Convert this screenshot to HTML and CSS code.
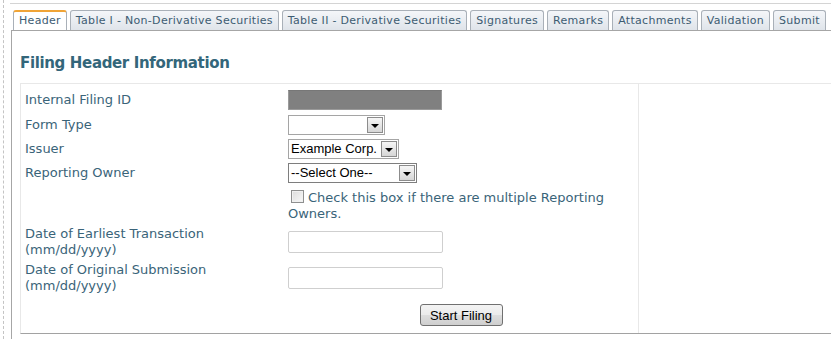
FILE: index.html
```html
<!DOCTYPE html>
<html>
<head>
<meta charset="utf-8">
<link rel="stylesheet" href="styles.css">
</head>
<body>
<div class="page">
  <div class="rail"></div>
  <div class="main">
    <div class="tabs">
      <div class="tab active">Header</div>
      <div class="tab">Table I - Non-Derivative Securities</div>
      <div class="tab">Table II - Derivative Securities</div>
      <div class="tab">Signatures</div>
      <div class="tab">Remarks</div>
      <div class="tab">Attachments</div>
      <div class="tab">Validation</div>
      <div class="tab">Submit</div>
    </div>
    <div class="panel">
      <h1 class="title">Filing Header Information</h1>
      <div class="form">
        <div class="fields">
          <div class="row row-first">
            <div class="label">Internal Filing ID</div>
            <div class="field"><div class="readonly"></div></div>
          </div>
          <div class="row">
            <div class="label">Form Type</div>
            <div class="field"><div class="select w-form"><span class="sel-text"></span><span class="arrow"></span></div></div>
          </div>
          <div class="row">
            <div class="label">Issuer</div>
            <div class="field"><div class="select w-issuer"><span class="sel-text">Example Corp.</span><span class="arrow"></span></div></div>
          </div>
          <div class="row">
            <div class="label">Reporting Owner</div>
            <div class="field"><div class="select w-owner dark"><span class="sel-text">--Select One--</span><span class="arrow"></span></div></div>
          </div>
          <div class="row row-check">
            <div class="label"></div>
            <div class="field check-text"><span class="checkbox"></span>Check this box if there are multiple Reporting Owners.</div>
          </div>
          <div class="row">
            <div class="label">Date of Earliest Transaction<br>(mm/dd/yyyy)</div>
            <div class="field"><div class="text-input"></div></div>
          </div>
          <div class="row">
            <div class="label">Date of Original Submission<br>(mm/dd/yyyy)</div>
            <div class="field"><div class="text-input"></div></div>
          </div>
          <div class="row row-button">
            <div class="label"></div>
            <div class="field center"><button class="btn">Start Filing</button></div>
          </div>
        </div>
        <div class="side"></div>
      </div>
    </div>
  </div>
</div>
</body>
</html>
```

FILE: styles.css
```css
html, body {
  margin: 0;
  padding: 0;
  background: #fff;
  overflow: hidden;
}
body {
  width: 831px;
  height: 339px;
  font-family: "DejaVu Sans", Verdana, sans-serif;
}
.page {
  display: flex;
  height: 339px;
}
.rail {
  width: 3px;
  flex: none;
  border-right: 1px dashed #c4c4c4;
}
.main {
  flex: 1;
  margin-left: 6px;
  margin-top: 3px;
  border-top: 1px solid #d4d4d4;
  display: flex;
  flex-direction: column;
}
.tabs {
  display: flex;
  gap: 3px;
  padding: 6px 0 0 3px;
}
.tab {
  height: 20px;
  box-sizing: border-box;
  padding: 0 5px;
  font-size: 11px;
  letter-spacing: 0.3px;
  line-height: 19px;
  color: #3d5c72;
  border: 1px solid #a9b0b8;
  border-bottom: none;
  border-radius: 3px 3px 0 0;
  background: linear-gradient(#f4f6f9, #dfe4ea);
  white-space: nowrap;
}
.tab.active {
  background: #fff;
  border-top: 2px solid #f0a436;
  line-height: 18px;
}
.panel {
  flex: 1;
  margin-left: 1px;
  border-left: 1px solid #a6a6a6;
  border-top: 1px solid #a6a6a6;
  padding: 0 0 0 8px;
}
.title {
  margin: 0;
  padding-top: 22px;
  font-size: 15px;
  letter-spacing: -0.35px;
  line-height: 20px;
  font-weight: bold;
  color: #33667a;
}
.form {
  margin-top: 10px;
  display: grid;
  grid-template-columns: 618px 1fr;
  border-top: 1px solid #e8e8e8;
  border-left: 1px solid #e8e8e8;
  border-bottom: 1px solid #a2a2a2;
}
.fields {
  border-right: 1px solid #e8e8e8;
  padding: 4px 4px 0 4px;
}
.row {
  display: grid;
  grid-template-columns: 263px 1fr;
  align-items: center;
  padding: 2px 0;
}
.row-first {
  padding-bottom: 3px;
}
.label {
  font-size: 13px;
  line-height: 16px;
  color: #3a6479;
}
.readonly {
  width: 154px;
  height: 20px;
  box-sizing: border-box;
  background: #808080;
  border: 1px solid #9a9a9a;
  border-top-color: #777;
}
.select {
  display: flex;
  align-items: center;
  height: 20px;
  box-sizing: border-box;
  border: 1px solid #a5a5a5;
  background: #fff;
  padding: 1px;
  font-family: "Liberation Sans", Arial, sans-serif;
  font-size: 13px;
  color: #000;
}
.select.dark {
  border-color: #7e7e7e;
}
.w-form { width: 97px; }
.w-issuer { width: 111px; }
.w-owner { width: 129px; }
.sel-text {
  flex: 1;
  padding-left: 1px;
  white-space: nowrap;
  overflow: hidden;
  line-height: 16px;
}
.arrow {
  width: 16px;
  height: 16px;
  box-sizing: border-box;
  border: 1px solid #8c8c8c;
  background: linear-gradient(#f6f6f6, #d6d6d6);
  display: flex;
  align-items: center;
  justify-content: center;
}
.arrow::after {
  content: "";
  border-left: 4px solid transparent;
  border-right: 4px solid transparent;
  border-top: 4px solid #000;
  margin-top: 1px;
}
.row-check {
  padding: 5px 0 2px;
}
.check-text {
  font-size: 13px;
  line-height: 16px;
  color: #3a6479;
}
.checkbox {
  display: inline-block;
  width: 13px;
  height: 13px;
  box-sizing: border-box;
  border: 1px solid #8e8f8f;
  background: linear-gradient(135deg, #dcdcdc, #f8f8f8);
  box-shadow: inset 0 0 0 1px #f0f0f0;
  vertical-align: -1px;
  margin: 0 4px 0 3px;
}
.text-input {
  width: 155px;
  height: 22px;
  box-sizing: border-box;
  border: 1px solid #cfcfcf;
  border-radius: 2px;
  background: #fff;
}
.row-button {
  padding: 8px 0 7px;
}
.center {
  display: flex;
  justify-content: center;
}
.btn {
  width: 83px;
  height: 22px;
  box-sizing: border-box;
  border: 1px solid #707070;
  border-radius: 3px;
  background: linear-gradient(#f3f3f3 0%, #ebebeb 50%, #dddddd 51%, #cfcfcf 100%);
  font-family: "Liberation Sans", Arial, sans-serif;
  font-size: 13px;
  color: #000;
  padding: 0;
}
.side {
  background: #fff;
}
```
